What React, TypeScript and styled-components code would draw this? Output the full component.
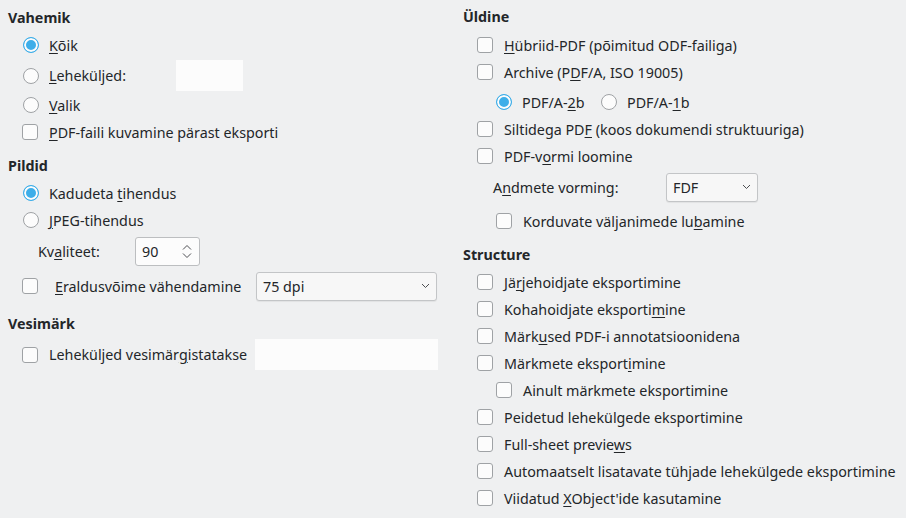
import React from "react";
import styled, { createGlobalStyle } from "styled-components";

const GlobalStyle = createGlobalStyle`
    html, body {
        margin: 0;
        padding: 0;
        background: #eff0f1;
    }
    body {
        font-family: "Noto Sans", "DejaVu Sans", sans-serif;
        font-size: 14.3px;
        color: #232629;
    }
    u {
        text-decoration-thickness: 1px;
        text-underline-offset: 2px;
    }
`;

const Page = styled.div`
    width: 906px;
    height: 518px;
    display: flex;
    padding: 0 8px;
    box-sizing: border-box;
    overflow: hidden;
`;

const Column = styled.div<{ $width?: number; $top: number }>`
    display: flex;
    flex-direction: column;
    width: ${(p) => (p.$width ? `${p.$width}px` : "auto")};
    padding-top: ${(p) => p.$top}px;
    flex-shrink: 0;
`;

const RightColumn = styled(Column)`
    padding-left: 8px;
`;

const Title = styled.div<{ $gap?: number }>`
    height: 20px;
    line-height: 20px;
    font-weight: bold;
    margin-top: ${(p) => p.$gap || 0}px;
`;

const Row = styled.div<{ $indent: number; $h?: number; $gap?: number }>`
    display: flex;
    align-items: center;
    height: ${(p) => p.$h || 27}px;
    margin-top: ${(p) => p.$gap || 0}px;
    padding-left: ${(p) => p.$indent}px;
    white-space: nowrap;
`;

const Box = styled.span<{ $space?: number }>`
    width: 16px;
    height: 16px;
    box-sizing: border-box;
    border: 1px solid #9fa2a5;
    border-radius: 3px;
    background: #fcfcfc;
    margin-right: ${(p) => p.$space || 11}px;
    flex-shrink: 0;
`;

const Radio = styled.span<{ $on?: boolean }>`
    width: 16px;
    height: 16px;
    box-sizing: border-box;
    border-radius: 50%;
    border: 1px solid ${(p) => (p.$on ? "#3daee9" : "#9fa2a5")};
    background: ${(p) => (p.$on ? "#3daee9" : "#fcfcfc")};
    box-shadow: ${(p) => (p.$on ? "inset 0 0 0 2px #fcfcfc" : "none")};
    margin-right: 10px;
    flex-shrink: 0;
`;

const Label = styled.span<{ $width?: number }>`
    display: inline-block;
    width: ${(p) => (p.$width ? `${p.$width}px` : "auto")};
    flex-shrink: 0;
`;

const TextField = styled.div<{ $width: number }>`
    width: ${(p) => p.$width}px;
    height: 31px;
    background: #fcfcfc;
`;

const Field = styled.div<{ $width: number }>`
    width: ${(p) => p.$width}px;
    height: 29px;
    box-sizing: border-box;
    border: 1px solid #bcbec0;
    border-radius: 3px;
    background: #fcfcfc;
    display: flex;
    align-items: center;
    justify-content: space-between;
    padding: 0 6px 0 6px;
`;

const ComboField = styled(Field)`
    background: #f7f7f7;
    border-color: #c3c5c7;
    box-shadow: 0 1px 1px rgba(0, 0, 0, 0.06);
`;

const Chevron = ({ up }: { up?: boolean }) => (
    <svg width="10" height="6" viewBox="0 0 10 6">
        <path
            d={up ? "M1 5.5 L5 1.5 L9 5.5" : "M1 0.5 L5 4.5 L9 0.5"}
            fill="none"
            stroke="#4d4f52"
            strokeWidth="1"
        />
    </svg>
);

const SpinArrows = styled.span`
    display: flex;
    flex-direction: column;
    gap: 3px;
    margin-right: 1px;
`;

const SmallChevron = () => (
    <svg width="9" height="6" viewBox="0 0 9 6">
        <path d="M1 1 L4.5 4.5 L8 1" fill="none" stroke="#4d4f52" strokeWidth="1" />
    </svg>
);

interface Item {
    text: React.ReactNode;
    indent?: number;
}

const structure: Item[] = [
    { text: <>Jä<u>r</u>jehoidjate eksportimine</> },
    { text: <>Kohahoidjate eksporti<u>m</u>ine</> },
    { text: <>Märk<u>u</u>sed PDF-i annotatsioonidena</> },
    { text: <>Märkmete eksport<u>i</u>mine</> },
    { text: <>Ainult märkmete eksportimine</>, indent: 33 },
    { text: <>Peidetud lehekülgede eksportimine</> },
    { text: <>Full-sheet previe<u>w</u>s</> },
    { text: <>Automaatselt lisatavate tühjade lehekülgede eksportimine</> },
    { text: <>Viidatud <u>X</u>Object'ide kasutamine</> },
];

export default function App() {
    return (
        <>
            <GlobalStyle />
            <Page>
                <Column $width={447} $top={8}>
                    <Title>Vahemik</Title>
                    <Row $indent={15} $h={30} $gap={2}>
                        <Radio $on />
                        <Label><u>K</u>õik</Label>
                    </Row>
                    <Row $indent={15} $h={31}>
                        <Radio />
                        <Label $width={127}><u>L</u>eheküljed:</Label>
                        <TextField $width={67} />
                    </Row>
                    <Row $indent={15} $h={28}>
                        <Radio />
                        <Label><u>V</u>alik</Label>
                    </Row>
                    <Row $indent={14} $h={26}>
                        <Box />
                        <Label><u>P</u>DF-faili kuvamine pärast eksporti</Label>
                    </Row>

                    <Title $gap={11}>Pildid</Title>
                    <Row $indent={15} $h={28} $gap={3}>
                        <Radio $on />
                        <Label>Kadudeta <u>t</u>ihendus</Label>
                    </Row>
                    <Row $indent={15} $h={26}>
                        <Radio />
                        <Label><u>J</u>PEG-tihendus</Label>
                    </Row>
                    <Row $indent={30} $h={30} $gap={3}>
                        <Label $width={97}>Kv<u>a</u>liteet:</Label>
                        <Field $width={65}>
                            <span>90</span>
                            <SpinArrows>
                                <Chevron up />
                                <Chevron />
                            </SpinArrows>
                        </Field>
                    </Row>
                    <Row $indent={14} $h={30} $gap={5}>
                        <Box $space={17} />
                        <Label $width={201}><u>E</u>raldusvõime vähendamine</Label>
                        <ComboField $width={181}>
                            <span>75 dpi</span>
                            <SmallChevron />
                        </ComboField>
                    </Row>

                    <Title $gap={13}>Vesimärk</Title>
                    <Row $indent={14} $h={31} $gap={5}>
                        <Box />
                        <Label $width={206}>Leheküljed vesimär<u>g</u>istatakse</Label>
                        <TextField $width={183} />
                    </Row>
                </Column>

                <RightColumn $top={7}>
                    <Title>Üldine</Title>
                    <Row $indent={14} $gap={4.5}>
                        <Box />
                        <Label><u>H</u>übriid-PDF (põimitud ODF-failiga)</Label>
                    </Row>
                    <Row $indent={14}>
                        <Box />
                        <Label>Archive (P<u>D</u>F/A, ISO 19005)</Label>
                    </Row>
                    <Row $indent={33} $gap={3}>
                        <Radio $on />
                        <Label $width={79}>PDF/A-<u>2</u>b</Label>
                        <Radio />
                        <Label>PDF/A-<u>1</u>b</Label>
                    </Row>
                    <Row $indent={14}>
                        <Box />
                        <Label>Siltidega PD<u>F</u> (koos dokumendi struktuuriga)</Label>
                    </Row>
                    <Row $indent={14}>
                        <Box />
                        <Label>PDF-v<u>o</u>rmi loomine</Label>
                    </Row>
                    <Row $indent={30} $h={29} $gap={3}>
                        <Label $width={173}>A<u>n</u>dmete vorming:</Label>
                        <ComboField $width={92}>
                            <span>FDF</span>
                            <SmallChevron />
                        </ComboField>
                    </Row>
                    <Row $indent={33} $gap={6}>
                        <Box />
                        <Label>Korduvate väljanimede lu<u>b</u>amine</Label>
                    </Row>

                    <Title $gap={10.5}>Structure</Title>
                    {structure.map((item, i) => (
                        <Row key={i} $indent={item.indent || 14} $gap={i === 0 ? 3.5 : 0}>
                            <Box />
                            <Label>{item.text}</Label>
                        </Row>
                    ))}
                </RightColumn>
            </Page>
        </>
    );
}
